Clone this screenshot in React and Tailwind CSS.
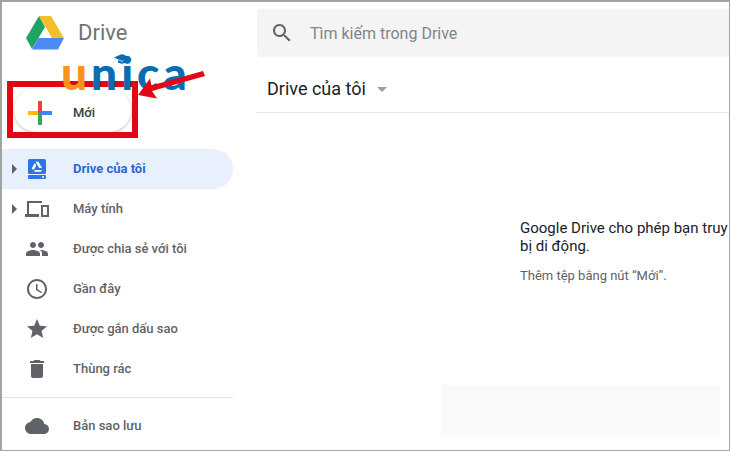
import React from 'react';

const DriveLogo = () => (
  <svg width="38" height="34" viewBox="0 0 38 34" className="block">
    <path d="M13 0h12l13 22H26z" fill="#f5bf2a" />
    <path d="M13 0L0 22l6 11L19 11z" fill="#1fa463" />
    <path d="M12.500 22H38l-6 11.500H6z" fill="#4c8bf5" />
  </svg>
);

const PlusIcon = () => (
  <svg width="24" height="24" viewBox="0 0 24 24" className="block">
    <rect x="0" y="10" width="12" height="4" fill="#fbbc05" />
    <rect x="10" y="0" width="4" height="12" fill="#ea4335" />
    <rect x="12" y="10" width="12" height="4" fill="#4285f4" />
    <rect x="10" y="12" width="4" height="12" fill="#34a853" />
  </svg>
);

const MyDriveIcon = () => (
  <svg width="18" height="20" viewBox="0 0 18 20" className="block">
    <rect width="18" height="15" rx="1.500" fill="#2f74e6" />
    <rect y="16" width="18" height="4" rx="1" fill="#2f74e6" />
    <circle cx="15" cy="18" r="1" fill="#fff" />
    <path d="M7.500 2.800h3L14 9h-2.800zM6.800 4l1.500 2.500L6 10.500H4.500L3.800 9.200zM7 11h7l-1.200 1.700H6z" fill="#fff" />
  </svg>
);

const ComputerIcon = () => (
  <svg width="24" height="16" viewBox="0 0 24 16" className="block">
    <path d="M2 0h15v2H4v11h10v3H0v-3h2z" fill="#5f6368" />
    <path fillRule="evenodd" d="M16 4h8v12h-8zM18 6v8h4V6z" fill="#5f6368" />
  </svg>
);

const SearchIcon = () => (
  <svg width="24" height="24" viewBox="0 0 24 24" className="block">
    <path fill="#5f6368" d="M15.500 14h-.79l-.28-.27C15.410 12.590 16 11.110 16 9.500 16 5.910 13.090 3 9.500 3S3 5.910 3 9.500 5.910 16 9.500 16c1.610 0 3.090-.59 4.230-1.570l.27.28v.79l5 4.990L20.490 19l-4.990-5zm-6 0C7.010 14 5 11.990 5 9.500S7.010 5 9.500 5 14 7.010 14 9.500 11.990 14 9.500 14z" />
  </svg>
);

const PeopleIcon = () => (
  <svg width="24" height="24" viewBox="0 0 24 24" className="block">
    <path fill="#5f6368" d="M16 11c1.660 0 2.990-1.340 2.990-3S17.660 5 16 5s-3 1.340-3 3 1.340 3 3 3zm-8 0c1.660 0 2.990-1.340 2.990-3S9.660 5 8 5 5 6.340 5 8s1.340 3 3 3zm0 2c-2.330 0-7 1.170-7 3.500V19h14v-2.500C15 14.170 10.330 13 8 13zm8 0c-.29 0-.62.02-.97.050 1.160.84 1.970 1.970 1.970 3.450V19h6v-2.500c0-2.330-4.670-3.500-7-3.500z" />
  </svg>
);

const ClockIcon = () => (
  <svg width="24" height="24" viewBox="0 0 24 24" className="block">
    <path fill="#5f6368" d="M11.990 2C6.470 2 2 6.480 2 12s4.470 10 9.990 10C17.520 22 22 17.520 22 12S17.520 2 11.990 2zM12 20c-4.420 0-8-3.580-8-8s3.580-8 8-8 8 3.580 8 8-3.580 8-8 8zm.500-13H11v6l5.250 3.150.75-1.230-4.500-2.670z" />
  </svg>
);

const StarIcon = () => (
  <svg width="24" height="24" viewBox="0 0 24 24" className="block">
    <path fill="#5f6368" d="M12 17.270L18.180 21l-1.640-7.030L22 9.240l-7.190-.61L12 2 9.190 8.630 2 9.240l5.460 4.730L5.820 21z" />
  </svg>
);

const TrashIcon = () => (
  <svg width="24" height="24" viewBox="0 0 24 24" className="block">
    <path fill="#5f6368" d="M6 19c0 1.100.9 2 2 2h8c1.100 0 2-.9 2-2V7H6v12zM19 4h-3.500l-1-1h-5l-1 1H5v2h14V4z" />
  </svg>
);

const CloudIcon = () => (
  <svg width="24" height="24" viewBox="0 0 24 24" className="block">
    <path fill="#5f6368" d="M19.350 10.040C18.670 6.590 15.640 4 12 4 9.110 4 6.600 5.640 5.350 8.040 2.340 8.360 0 10.910 0 14c0 3.310 2.690 6 6 6h13c2.760 0 5-2.240 5-5 0-2.640-2.050-4.780-4.650-4.960z" />
  </svg>
);

const Caret = () => (
  <div className="h-0 w-0 border-y-[5px] border-l-[5px] border-y-transparent border-l-[#5f6368]" />
);

const NavItem = ({ icon, label, active, caret }) => (
  <div className={`flex h-10 items-center rounded-r-full ${active ? 'bg-[#e8f0fe]' : ''}`}>
    <div className="flex w-[15px] justify-end">{caret && <Caret />}</div>
    <div className="flex w-[40px] justify-center">{icon}</div>
    <span className={`ml-[16px] text-[13px] ${active ? 'font-bold text-[#2f66d0]' : 'font-medium text-[#5f6368]'}`}>
      {label}
    </span>
  </div>
);

const App = () => {
  return (
    <div className="relative h-[451px] w-[730px] overflow-hidden border border-[#a3a3a3] border-t-2 border-l-2 bg-white font-['Roboto',sans-serif]">
      <div className="flex h-full">
        {/* Sidebar */}
        <aside className="w-[231px] shrink-0">
          <div className="flex h-[86px] items-start pl-[24px] pt-[14px]">
            <DriveLogo />
            <span className="ml-[14px] mt-[2px] text-[22px] leading-[30px] text-[#6f7377]">Drive</span>
          </div>
          <div className="ml-[12px] flex h-[44px] w-[117px] items-center rounded-full bg-white pl-[14px] pt-[6px] shadow-[0_1px_3px_rgba(60,64,67,0.35)]">
            <PlusIcon />
            <span className="ml-[21px] text-[13px] font-medium text-[#3c4043]">Mới</span>
          </div>
          <div className="mt-[17px]">
            <NavItem active caret icon={<MyDriveIcon />} label="Drive của tôi" />
            <NavItem caret icon={<ComputerIcon />} label="Máy tính" />
            <NavItem icon={<PeopleIcon />} label="Được chia sẻ với tôi" />
            <NavItem icon={<ClockIcon />} label="Gần đây" />
            <NavItem icon={<StarIcon />} label="Được gắn dấu sao" />
            <NavItem icon={<TrashIcon />} label="Thùng rác" />
          </div>
          <div className="mt-[8px] border-t border-[#e4e5e7] pt-[8px]">
            <NavItem icon={<CloudIcon />} label="Bản sao lưu" />
          </div>
        </aside>

        {/* Main */}
        <main className="min-w-0 flex-1 pl-[24px] pt-[7px]">
          <div className="flex h-[48px] items-center rounded-l-[4px] bg-[#f4f4f4] pl-[13px]">
            <SearchIcon />
            <span className="ml-[16px] pt-[2px] text-[16px] text-[#80868b]">Tìm kiếm trong Drive</span>
          </div>
          <div className="flex h-[56px] items-center border-b border-[#e4e5e7] pl-[10px] pt-[7px]">
            <span className="text-[18px] text-[#202124]">Drive của tôi</span>
            <div className="ml-[11px] mt-[2px] h-0 w-0 border-x-[5px] border-t-[5px] border-x-transparent border-t-[#9aa0a6]" />
          </div>
          <div className="pl-[263px] pt-[106px]">
            <p className="text-[15px] leading-[18px] text-[#202124]">
              Google Drive cho phép bạn truy
              <br />
              bị di động.
            </p>
            <p className="mt-[13px] text-[13px] leading-[16px] text-[#5f6368]">Thêm tệp bằng nút “Mới”.</p>
          </div>
        </main>
      </div>

      {/* Faint watermark patch */}
      <div className="absolute left-[439px] top-[383px] h-[52px] w-[279px] bg-[#fbfafb]" />

      {/* Red highlight box */}
      <div className="absolute left-[5px] top-[79px] h-[57px] w-[131px] border-[6px] border-[#e30613]" />

      {/* Unica logo lying over the page */}
      <div className="absolute left-[59px] top-[46px] flex font-['Lato',sans-serif] text-[46px] font-black leading-[50px] tracking-[4px]">
        <span className="text-[#f7941e]">u</span>
        <span className="text-[#0a6db3]">nica</span>
      </div>
      <svg width="16" height="10" viewBox="0 0 16 10" className="absolute left-[112px] top-[52px]">
        <path d="M8 0l8 3.500-8 3.500-8-3.500z" fill="#0a6db3" />
        <path d="M4 6v2.500c2.500 1.500 5.500 1.500 8 0V6L8 7.800z" fill="#0a6db3" />
      </svg>

      {/* Red arrow */}
      <svg width="70" height="30" viewBox="0 0 70 30" className="absolute left-[135px] top-[67px]">
        <path d="M66 2L68 7 15 22l5 7.500L1 26 13 9.500l1.500 7z" fill="#e30613" />
      </svg>
    </div>
  );
};

export default App;
